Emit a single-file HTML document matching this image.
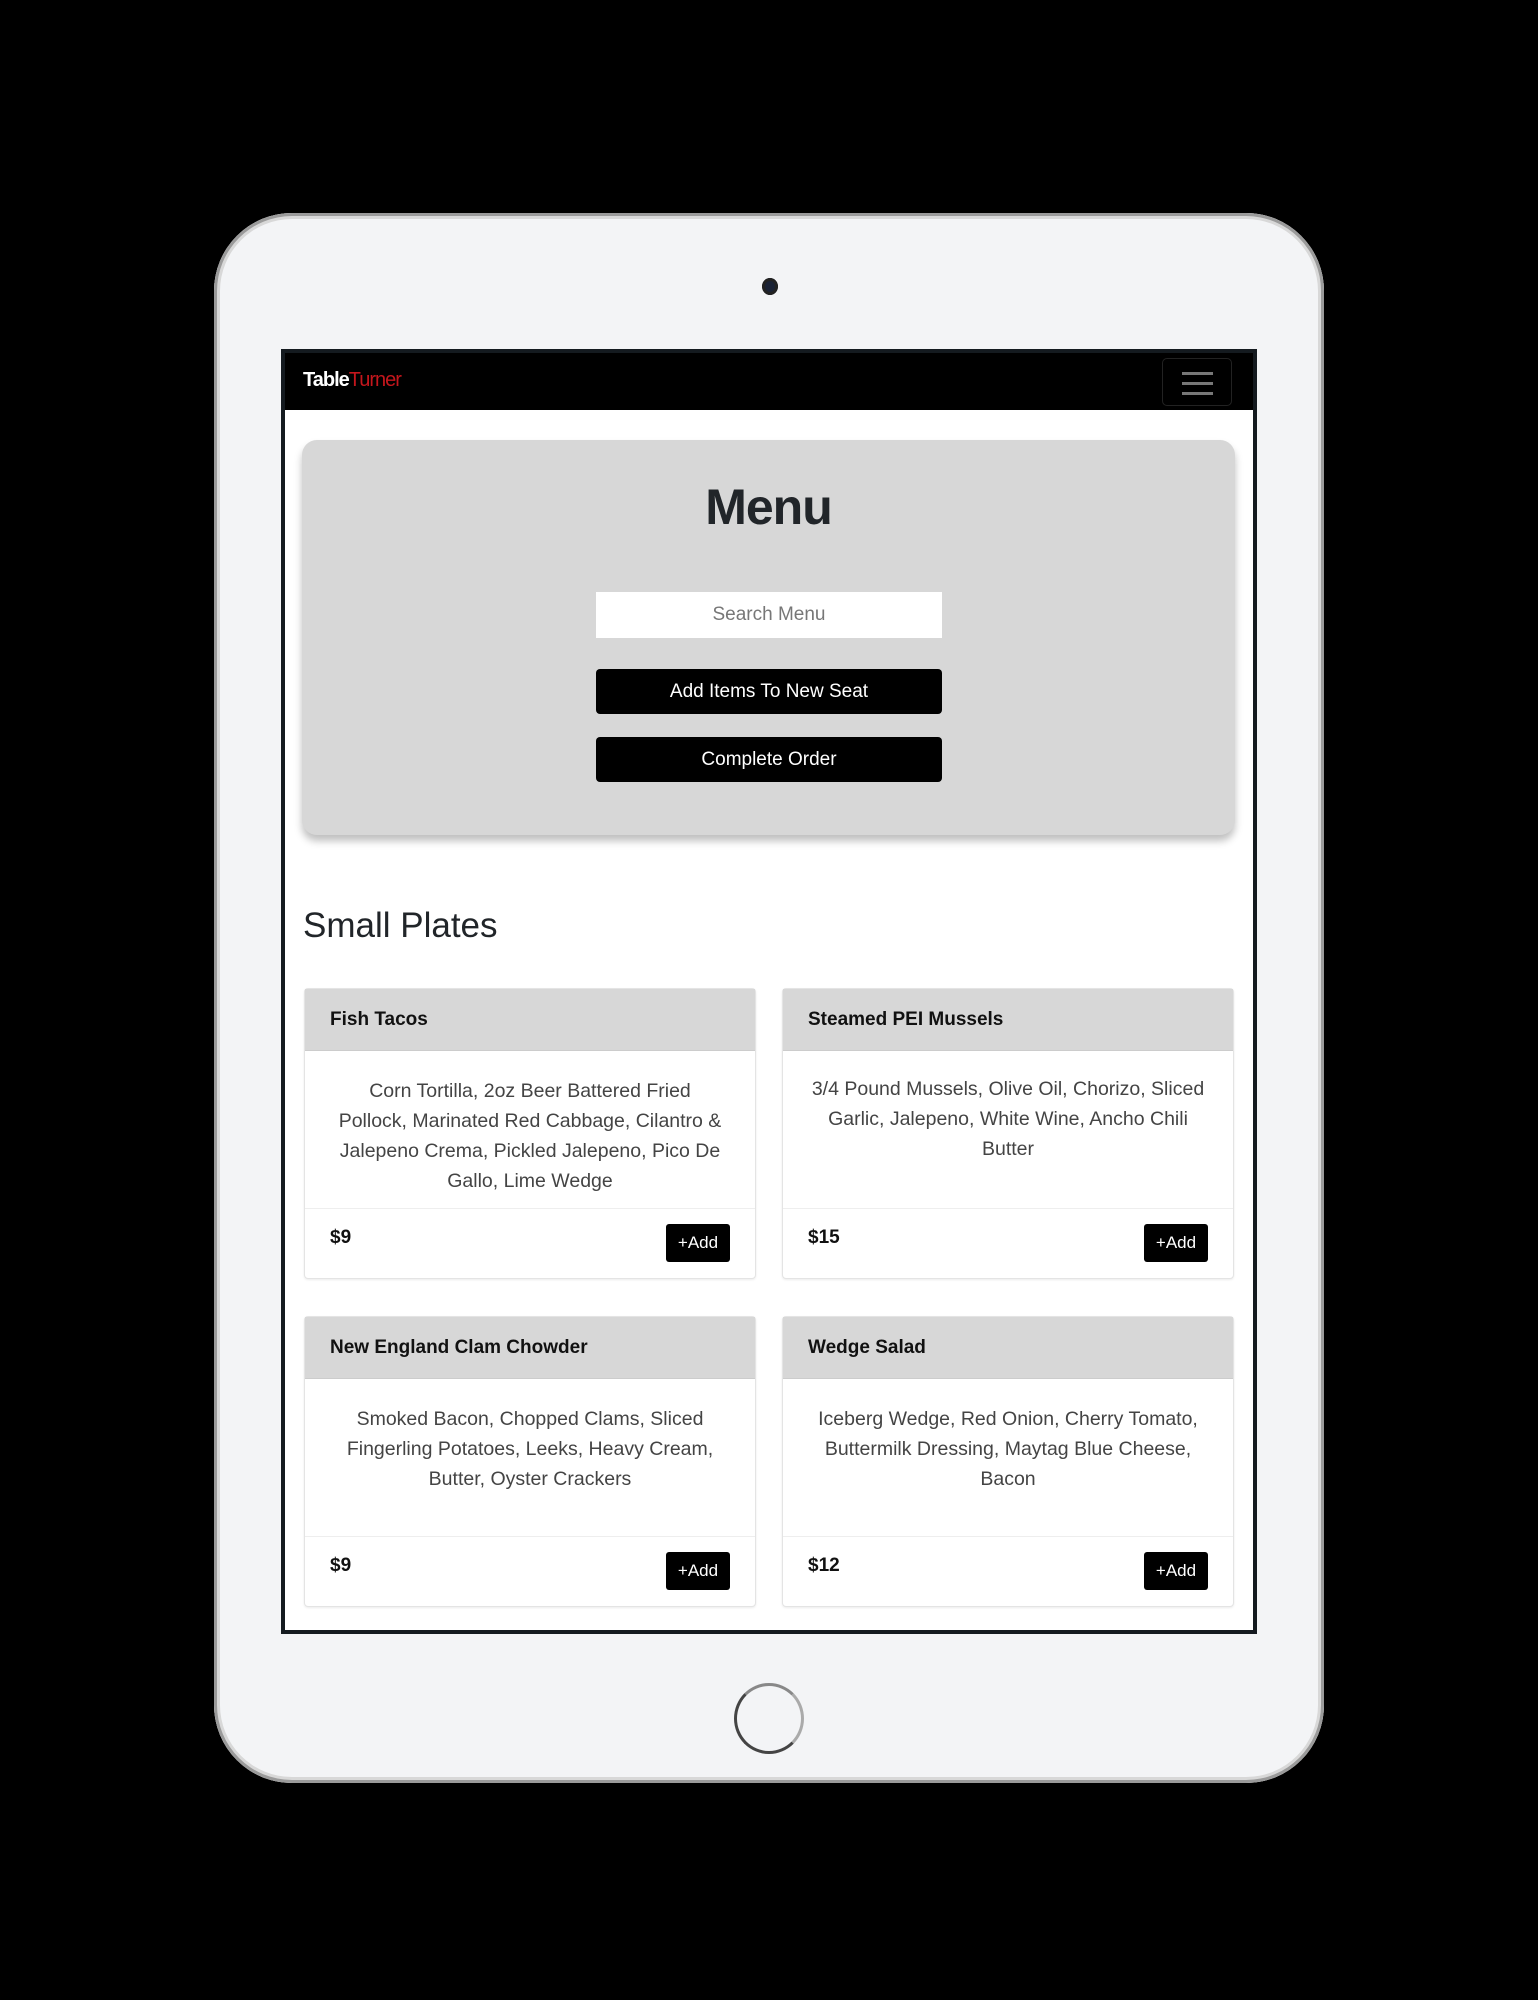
<!DOCTYPE html>
<html><head><meta charset="utf-8"><style>
*{box-sizing:border-box;margin:0;padding:0}
body{width:1538px;height:2000px;background:#000;position:relative;overflow:hidden;font-family:"Liberation Sans",Arial,sans-serif}
.dev{position:absolute;left:214px;top:213px;width:1110px;height:1570px;border-radius:78px;background:#f3f4f6;box-shadow:inset 0 0 0 3px #9a9a9a,inset 0 0 0 6px #d8d8d8}
.cam{position:absolute;left:762px;top:278px;width:16px;height:17px;border-radius:50%;background:#1a2235;box-shadow:inset 0 0 0 3px #222}
.home{position:absolute;left:734px;top:1683px;width:70px;height:71px;border-radius:50%;border:3px solid #444;border-right-color:#aaa;border-top-color:#888}
.scr{position:absolute;left:281px;top:349px;width:976px;height:1285px;background:#fff;border:4px solid #141a1f}
.nav{position:absolute;left:0;top:0;width:968px;height:57px;background:#000}
.logo{position:absolute;left:18px;top:16px;font-size:20px;font-weight:bold;color:#fff;letter-spacing:-1px}
.logo span{color:#c4161c;font-weight:normal}
.ham{position:absolute;left:877px;top:5px;width:70px;height:48px;border:1px solid #222;border-radius:5px}
.ham i{position:absolute;left:19px;width:31px;height:3px;background:#777}
.jum{position:absolute;left:17px;top:87px;width:933px;height:395px;background:#d7d7d7;border-radius:15px;box-shadow:0 6px 8px rgba(0,0,0,.25)}
.jum h1{position:absolute;left:0;width:100%;top:38px;text-align:center;font-size:50px;color:#212529;letter-spacing:-1px}
.inp{position:absolute;left:294px;top:152px;width:346px;height:46px;background:#fff;text-align:center;line-height:46px;color:#777;font-size:19px}
.btn{position:absolute;left:294px;width:346px;height:45px;background:#000;color:#fff;border-radius:4px;text-align:center;line-height:45px;font-size:19px}
h2{position:absolute;left:18px;top:553px;font-size:35px;font-weight:normal;color:#212529}
.card{position:absolute;width:452px;border:1px solid #e4e4e4;border-radius:4px;background:#fff;box-shadow:0 1px 2px rgba(0,0,0,.08)}
.ch{height:62px;background:#d7d7d7;padding:0 25px;line-height:62px;font-weight:bold;font-size:19px;color:#111;border-bottom:1px solid #ccc}
.cb{height:158px;padding:25px 0 0;text-align:center;font-size:19.5px;line-height:30px;color:#444;border-bottom:1px solid #eee;white-space:nowrap}
.cf{height:69px;position:relative}
.pr{position:absolute;left:25px;top:18px;font-weight:bold;font-size:19px;color:#111}
.add{position:absolute;right:25px;top:15px;width:64px;height:38px;background:#000;color:#fff;border-radius:3px;text-align:center;line-height:38px;font-size:17px}
</style></head><body>
<div class="dev"></div>
<div class="cam"></div>
<div class="home"></div>
<div class="scr">
 <div class="nav"><div class="logo">Table<span>Turner</span></div><div class="ham"><i style="top:13px"></i><i style="top:23px"></i><i style="top:33px"></i></div></div>
 <div class="jum"><h1>Menu</h1><div class="inp">Search Menu</div><div class="btn" style="top:229px">Add Items To New Seat</div><div class="btn" style="top:297px">Complete Order</div></div>
 <h2>Small Plates</h2>
 <div class="card" style="left:19px;top:635px"><div class="ch">Fish Tacos</div><div class="cb">Corn Tortilla, 2oz Beer Battered Fried<br>Pollock, Marinated Red Cabbage, Cilantro &amp;<br>Jalepeno Crema, Pickled Jalepeno, Pico De<br>Gallo, Lime Wedge</div><div class="cf"><div class="pr">$9</div><div class="add">+Add</div></div></div>
 <div class="card" style="left:497px;top:635px"><div class="ch">Steamed PEI Mussels</div><div class="cb" style="padding-top:23px">3/4 Pound Mussels, Olive Oil, Chorizo, Sliced<br>Garlic, Jalepeno, White Wine, Ancho Chili<br>Butter</div><div class="cf"><div class="pr">$15</div><div class="add">+Add</div></div></div>
 <div class="card" style="left:19px;top:963px"><div class="ch">New England Clam Chowder</div><div class="cb">Smoked Bacon, Chopped Clams, Sliced<br>Fingerling Potatoes, Leeks, Heavy Cream,<br>Butter, Oyster Crackers</div><div class="cf"><div class="pr">$9</div><div class="add">+Add</div></div></div>
 <div class="card" style="left:497px;top:963px"><div class="ch">Wedge Salad</div><div class="cb">Iceberg Wedge, Red Onion, Cherry Tomato,<br>Buttermilk Dressing, Maytag Blue Cheese,<br>Bacon</div><div class="cf"><div class="pr">$12</div><div class="add">+Add</div></div></div>
</div>
</body></html>
